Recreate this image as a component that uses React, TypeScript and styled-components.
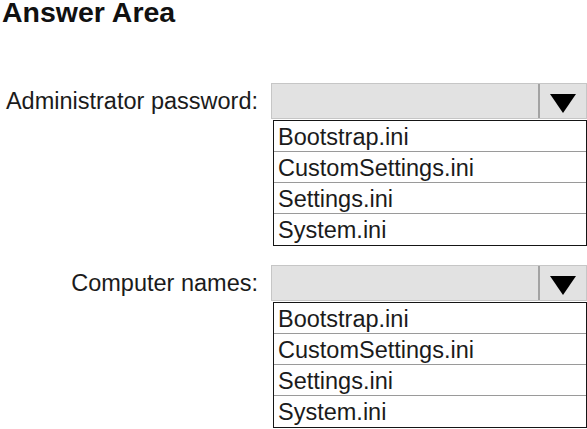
import React from "react";
import styled, { createGlobalStyle } from "styled-components";

const Global = createGlobalStyle`
  html, body { margin: 0; padding: 0; background: #ffffff; }
  body { font-family: "Liberation Sans", Arial, sans-serif; color: #1b1b1b; overflow: hidden; }
`;

const Page = styled.div`
  width: 587px;
  height: 429px;
  overflow: hidden;
`;

const Title = styled.h1`
  margin: -2px 0 0 0;
  padding-left: 2px;
  font-size: 28.5px;
  line-height: 28px;
  font-weight: bold;
  color: #111;
`;

const Field = styled.div<{ $top: number }>`
  display: grid;
  grid-template-columns: 258px 316px;
  column-gap: 13px;
  margin-top: ${(p) => p.$top}px;
`;

const Label = styled.div`
  text-align: right;
  font-size: 23.5px;
  line-height: 36px;
  height: 36px;
  white-space: nowrap;
`;

const Control = styled.div`
  display: flex;
  flex-direction: column;
`;

const Header = styled.div`
  box-sizing: border-box;
  height: 36px;
  width: 316px;
  display: flex;
  background: #e2e2e2;
  border: 1px solid #c6c6c6;
`;

const HeaderValue = styled.div`
  flex: 1;
`;

const ArrowButton = styled.div`
  width: 48px;
  border-left: 2px solid #a3a3a3;
  display: flex;
  align-items: center;
  justify-content: center;
  padding-top: 5px;
  box-sizing: border-box;
`;

const List = styled.ul`
  list-style: none;
  margin: 1px 0 0 2px;
  padding: 0;
  width: 314px;
  box-sizing: border-box;
  border: 1px solid #151515;
  background: #fff;
`;

const Item = styled.li<{ $last?: boolean }>`
  height: 31px;
  box-sizing: border-box;
  padding: 1px 0 0 4px;
  font-size: 23.5px;
  line-height: 30px;
  border-bottom: ${(p) => (p.$last ? "none" : "1px solid #9a9a9a")};
  white-space: nowrap;
`;

const options = ["Bootstrap.ini", "CustomSettings.ini", "Settings.ini", "System.ini"];

const Dropdown: React.FC = () => (
  <Control>
    <Header>
      <HeaderValue />
      <ArrowButton>
        <svg width="26" height="19" viewBox="0 0 26 19">
          <polygon points="0,0 26,0 13,19" fill="#000" />
        </svg>
      </ArrowButton>
    </Header>
    <List>
      {options.map((o, i) => (
        <Item key={o} $last={i === options.length - 1}>
          {o}
        </Item>
      ))}
    </List>
  </Control>
);

export default function App() {
  return (
    <Page>
      <Global />
      <Title>Answer Area</Title>
      <Field $top={57}>
        <Label>Administrator password:</Label>
        <Dropdown />
      </Field>
      <Field $top={19}>
        <Label>Computer names:</Label>
        <Dropdown />
      </Field>
    </Page>
  );
}
